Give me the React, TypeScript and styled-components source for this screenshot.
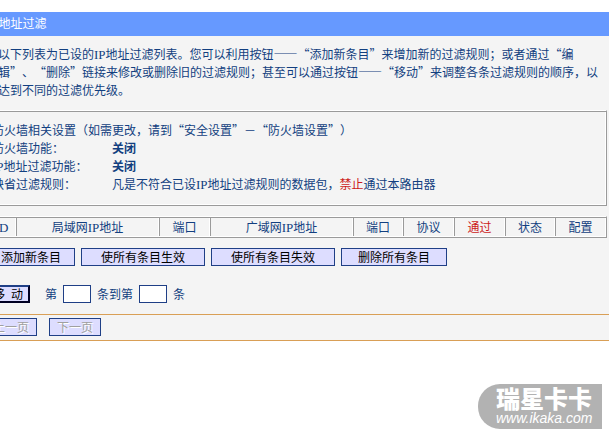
import React from "react";
import styled, { createGlobalStyle, css } from "styled-components";

const ink = "#123f80";
const shade = "#9a9a9a";
const paper = "#f4f4f4";

const GlobalStyle = createGlobalStyle`
  body {
    margin: 0;
    background: #ffffff;
    color: ${ink};
    font-family: "Noto Sans CJK SC", sans-serif;
    font-size: 12px;
    line-height: 18px;
    text-spacing-trim: space-all;
  }
  button, input, table {
    font: inherit;
    color: inherit;
  }
`;

const ridge = css`
  border: 1px solid;
  border-color: #ffffff ${shade} ${shade} #ffffff;
  box-shadow: inset 1px 1px 0 ${shade}, inset -1px -1px 0 #ffffff;
`;

/* The frame is scrolled slightly to the right, so its left edge is cut. */
const Page = styled.div`
  overflow: hidden;
  padding-top: 12px;
`;

const Sheet = styled.main`
  margin-left: -16px;
  background: ${paper};
`;

const Title = styled.h1`
  margin: 0;
  padding: 2px 3px 4px;
  background: #6699ff;
  color: #ffffff;
  font-size: 12px;
  font-weight: 400;
`;

const Latin = styled.span`
  font-family: "Liberation Serif", serif;
  font-size: 13px;
  line-height: 12px;
`;

const Content = styled.div`
  display: flex;
  flex-direction: column;
  gap: 10px;
  padding: 9px 2px 11px;
`;

const Notice = styled.p`
  margin: 0;
  padding: 0 0 1px 12px;
  white-space: nowrap;
`;

const Panel = styled.section`
  ${ridge}
  padding: 10px 5px 12px;
`;

const PanelHead = styled.p`
  margin: 0;
`;

const Settings = styled.dl`
  display: grid;
  grid-template-columns: 120px 1fr;
  margin: 0;
`;

const Term = styled.dt``;

const Value = styled.dd<{ $strong?: boolean }>`
  margin: 0;
  font-weight: ${(p) => (p.$strong ? 700 : 400)};
`;

const Danger = styled.span`
  color: #cc1a1a;
`;

const Rules = styled.table`
  ${ridge}
  width: 100%;
  table-layout: fixed;
  border-collapse: separate;
  border-spacing: 0;
  padding: 1px;
`;

const Head = styled.th<{ $width?: number; $danger?: boolean }>`
  box-sizing: border-box;
  width: ${(p) => (p.$width ? `${p.$width}px` : "auto")};
  padding: 0;
  border-left: 1px solid ${shade};
  border-right: 1px solid #ffffff;
  color: ${(p) => (p.$danger ? "#cc1a1a" : ink)};
  font-weight: 400;
  text-align: center;
  &:first-child {
    border-left: 0;
  }
  &:last-child {
    border-right: 0;
  }
`;

const Row = styled.div`
  display: flex;
  align-items: center;
  gap: 6px;
  padding-left: 1px;
`;

const MoveRow = styled(Row)`
  padding: 9px 0 0;
`;

const Button = styled.button<{ $width: number; $heavy?: boolean }>`
  box-sizing: border-box;
  flex: none;
  width: ${(p) => p.$width}px;
  height: 18px;
  padding: 0;
  border: ${(p) => (p.$heavy ? 2 : 1)}px solid #1f3f86;
  ${(p) => p.$heavy && "border-color: #1f3f86 #000022 #000022 #1f3f86;"}
  border-radius: 0;
  background: #ddddff;
  color: #000000;
  line-height: ${(p) => (p.$heavy ? 14 : 16)}px;
  text-align: center;
  white-space: pre;
  &:disabled {
    color: #a0a0a0;
    text-shadow: 1px 1px 0 #ffffff;
  }
`;

const Range = styled.div`
  display: flex;
  align-items: center;
  gap: 6px;
  padding-left: 9px;
`;

const Field = styled.label`
  display: flex;
  align-items: center;
  gap: 6px;
`;

const NumberBox = styled.input`
  box-sizing: border-box;
  width: 28px;
  height: 18px;
  padding: 0 2px;
  border: 1px solid #1f3f86;
  border-radius: 0;
  background: #ffffff;
`;

const Pager = styled.nav`
  display: flex;
  gap: 12px;
  padding: 3px 1px 4px;
  border-top: 1px solid #d99f56;
  border-bottom: 1px solid #d99f56;
`;

const Stamp = styled.footer`
  box-sizing: border-box;
  width: 124px;
  margin: 43px 7px 5px auto;
  padding: 2px 0 3px 18px;
  border-radius: 22px 0 0 22px;
  background: #b2b2b2;
  color: #ffffff;
`;

const StampName = styled.div`
  font-size: 24px;
  font-weight: 900;
  line-height: 24px;
`;

const StampLink = styled.a`
  display: block;
  color: inherit;
  font-family: "Liberation Sans", sans-serif;
  font-size: 14px;
  font-style: italic;
  line-height: 16px;
  text-decoration: none;
`;

const columns = [
  { key: "id", label: <Latin>ID</Latin>, width: 28 },
  { key: "lan", label: <>局域网<Latin>IP</Latin>地址</> },
  { key: "lanPort", label: "端口", width: 51 },
  { key: "wan", label: <>广域网<Latin>IP</Latin>地址</> },
  { key: "wanPort", label: "端口", width: 50 },
  { key: "protocol", label: "协议", width: 51 },
  { key: "pass", label: "通过", width: 51, danger: true },
  { key: "status", label: "状态", width: 50 },
  { key: "config", label: "配置", width: 50 },
];

const actions = [
  { label: "添加新条目", width: 88 },
  { label: "使所有条目生效", width: 124 },
  { label: "使所有条目失效", width: 124 },
  { label: "删除所有条目", width: 106 },
];

export default function App() {
  return (
    <Page lang="zh-CN">
      <GlobalStyle />
      <Sheet>
        <Title><Latin>IP</Latin>地址过滤</Title>
        <Content>
          <Notice>
            以下列表为已设的<Latin>IP</Latin>地址过滤列表。您可以利用按钮——“添加新条目”来增加新的过滤规则；或者通过“编
            <br />
            辑”、“删除”链接来修改或删除旧的过滤规则；甚至可以通过按钮——“移动”来调整各条过滤规则的顺序，以
            <br />
            达到不同的过滤优先级。
          </Notice>
          <Panel>
            <PanelHead>防火墙相关设置（如需更改，请到“安全设置”－“防火墙设置”）</PanelHead>
            <Settings>
              <Term>防火墙功能：</Term>
              <Value $strong>关闭</Value>
              <Term><Latin>IP</Latin>地址过滤功能：</Term>
              <Value $strong>关闭</Value>
              <Term>缺省过滤规则：</Term>
              <Value>
                凡是不符合已设<Latin>IP</Latin>地址过滤规则的数据包，<Danger>禁止</Danger>通过本路由器
              </Value>
            </Settings>
          </Panel>
          <Rules>
            <thead>
              <tr>
                {columns.map((c) => (
                  <Head key={c.key} scope="col" $width={c.width} $danger={c.danger}>
                    {c.label}
                  </Head>
                ))}
              </tr>
            </thead>
          </Rules>
          <Row>
            {actions.map((a) => (
              <Button key={a.label} type="button" $width={a.width}>{a.label}</Button>
            ))}
          </Row>
          <MoveRow>
            <Button type="button" $width={44} $heavy>{"移\u2002动"}</Button>
            <Range>
              <Field>第<NumberBox type="text" /></Field>
              <Field>条到第<NumberBox type="text" /></Field>
              条
            </Range>
          </MoveRow>
        </Content>
        <Pager>
          <Button type="button" $width={52} disabled>上一页</Button>
          <Button type="button" $width={52} disabled>下一页</Button>
        </Pager>
      </Sheet>
      <Stamp>
        <StampName>瑞星卡卡</StampName>
        <StampLink href="#">www.ikaka.com</StampLink>
      </Stamp>
    </Page>
  );
}
